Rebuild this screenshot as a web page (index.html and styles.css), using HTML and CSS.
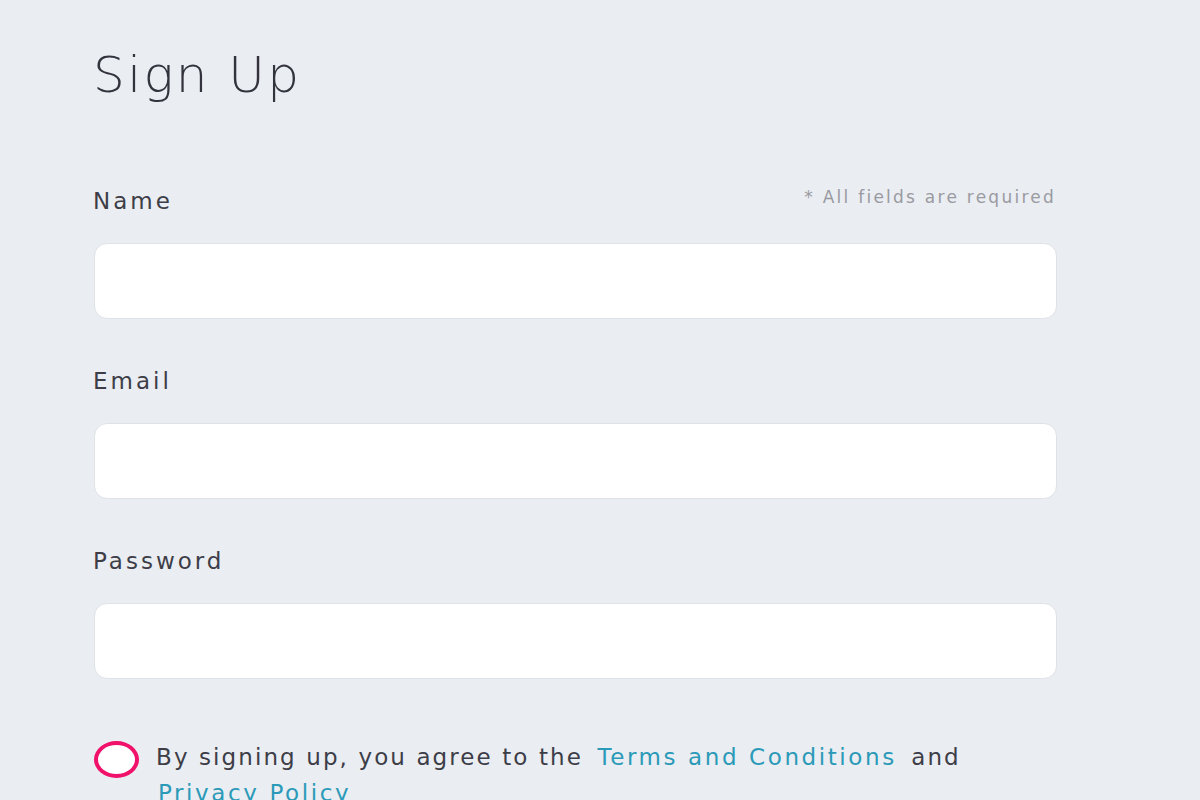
FILE: index.html
```html
<!DOCTYPE html>
<html lang="en">
<head>
<meta charset="utf-8">
<title>Sign Up</title>
<link rel="stylesheet" href="styles.css">
</head>
<body>
<main class="signup">
  <h1 class="title">Sign Up</h1>
  <form class="form">
    <div class="field">
      <div class="label-row">
        <label class="label" for="name">Name</label>
        <span class="note">* All fields are required</span>
      </div>
      <input class="input" id="name" type="text">
    </div>
    <div class="field">
      <div class="label-row">
        <label class="label" for="email">Email</label>
      </div>
      <input class="input" id="email" type="email">
    </div>
    <div class="field">
      <div class="label-row">
        <label class="label" for="password">Password</label>
      </div>
      <input class="input" id="password" type="password">
    </div>
    <div class="agree">
      <span class="check"></span>
      <p class="agree-text">By signing up, you agree to the <a class="link" href="#">Terms and Conditions</a> and <a class="link link-second" href="#">Privacy Policy</a></p>
    </div>
  </form>
</main>
</body>
</html>
```
FILE: styles.css
```css
html, body {
  margin: 0;
  padding: 0;
  background: #eaedf1;
}
body {
  font-family: "DejaVu Sans", sans-serif;
  color: #3d3d48;
  overflow: hidden;
  height: 800px;
}
.signup {
  width: 963px;
  padding-left: 93px;
}
.title {
  margin: 45px 0 0 0;
  font-size: 50px;
  line-height: 60px;
  font-weight: 300;
  letter-spacing: 2.4px;
  color: #33333d;
}
.form {
  margin-top: 81px;
}
.field {
  margin-bottom: 47px;
}
.label-row {
  display: flex;
  justify-content: space-between;
  align-items: flex-start;
  height: 30px;
  margin-bottom: 27px;
}
.label {
  font-size: 23px;
  line-height: 30px;
  letter-spacing: 3px;
  color: #3d3d48;
}
.note {
  font-size: 17px;
  line-height: 22px;
  letter-spacing: 2.25px;
  color: #9a9aa2;
}
.input {
  display: block;
  box-sizing: border-box;
  width: 963px;
  height: 76px;
  margin: 0 0 0 1px;
  border: 1px solid #dfe2e6;
  border-radius: 13px;
  background: #fff;
  outline: none;
}
.agree {
  display: flex;
  align-items: flex-start;
  margin-top: 60px;
  gap: 17px;
}
.check {
  flex: none;
  box-sizing: border-box;
  width: 45px;
  height: 37px;
  margin: 2px 0 0 1px;
  border: 4px solid #f0116a;
  border-radius: 50%;
  background: #fff;
}
.agree-text {
  margin: 0;
  font-size: 23px;
  line-height: 36px;
  letter-spacing: 2.1px;
  color: #3d3d48;
}
.link {
  color: #2a9ab8;
  text-decoration: none;
  margin: 0 5px;
  letter-spacing: 2.6px;
}
.link-second {
  margin: 0 2px;
}
```
